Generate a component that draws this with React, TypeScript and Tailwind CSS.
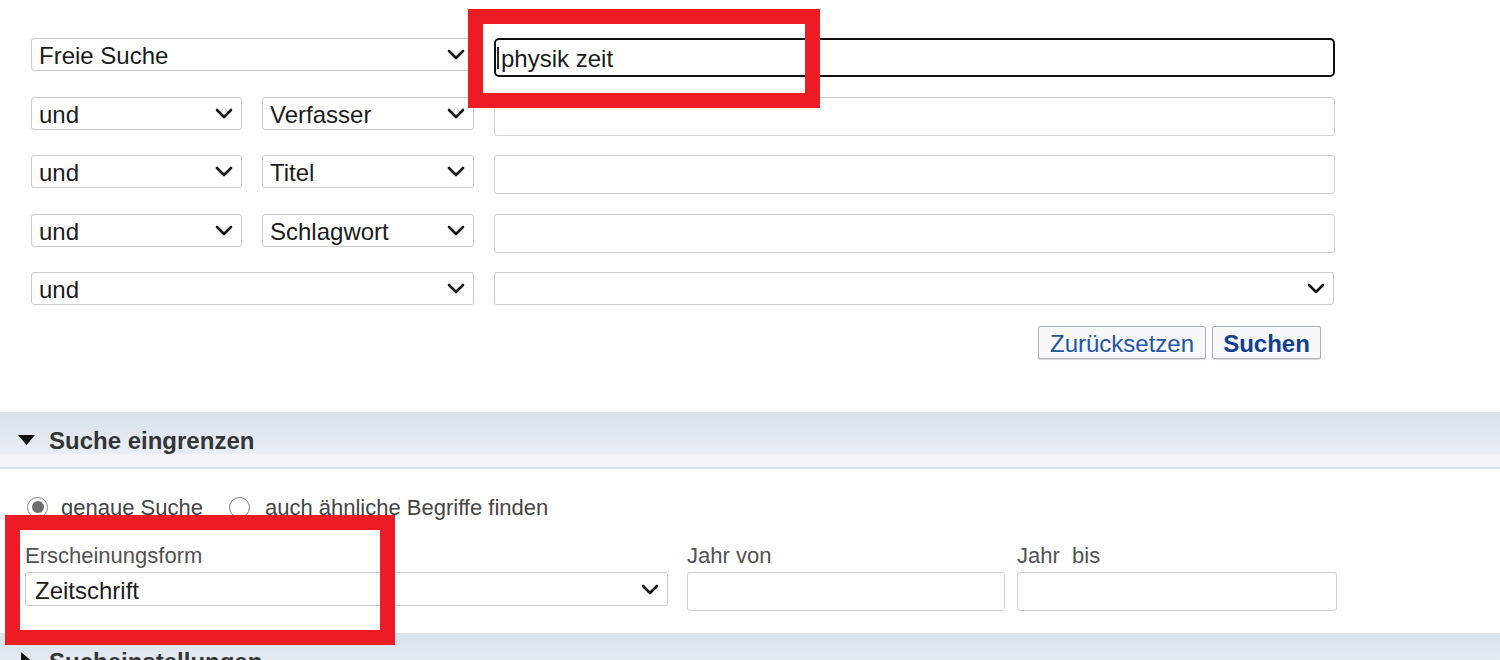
import React from "react";

const Chevron = () => (
  <svg width="18" height="11" viewBox="0 0 18 11" className="shrink-0">
    <path
      d="M2 2 L9 9 L16 2"
      fill="none"
      stroke="#141414"
      strokeWidth="2.6"
      strokeLinecap="round"
      strokeLinejoin="round"
    />
  </svg>
);

type SelectProps = {
  label?: string;
  className?: string;
};

const Select: React.FC<SelectProps> = ({ label = "", className = "" }) => (
  <div
    className={`flex h-[33px] items-center justify-between rounded-[3px] border-[1.5px] border-[#cccccc] bg-white pl-[7px] pr-[8px] text-[24px] leading-none text-[#1b1b1b] ${className}`}
  >
    <span className="pt-[3px]">{label}</span>
    <Chevron />
  </div>
);

const TextBox: React.FC<{ className?: string }> = ({ className = "" }) => (
  <div
    className={`h-[39px] rounded-[3px] border-[1.5px] border-[#d2d2d2] bg-white ${className}`}
  />
);

const SectionHeader: React.FC<{ title: string; open: boolean }> = ({
  title,
  open,
}) => (
  <div className="flex h-[57px] items-center border-b-2 border-[#d5e1ee] bg-[linear-gradient(to_bottom,#d9e2ed_0%,#e9eef5_76%,#f2f4f7_77%,#f2f4f7_100%)]">
    <div className="flex w-[49px] justify-center pl-[3px]">
      {open ? (
        <svg width="17" height="10" viewBox="0 0 17 10">
          <polygon points="0,0 17,0 8.5,10" fill="#111" />
        </svg>
      ) : (
        <svg width="10" height="17" viewBox="0 0 10 17">
          <polygon points="0,0 10,8.5 0,17" fill="#111" />
        </svg>
      )}
    </div>
    <span className="pt-[3px] text-[24px] font-bold text-[#353535]">{title}</span>
  </div>
);

export default function App() {
  const rows = [
    { op: "und", field: "Verfasser" },
    { op: "und", field: "Titel" },
    { op: "und", field: "Schlagwort" },
  ];

  return (
    <div
      className="relative h-[660px] w-full overflow-hidden bg-white text-[#1b1b1b]"
      style={{ fontFamily: '"Liberation Sans", Arial, sans-serif' }}
    >
      {/* search rows */}
      <div className="pl-[31px] pt-[38px]">
        <div className="flex flex-col gap-[19.5px]">
          <div className="flex items-start gap-[20px]">
            <Select label="Freie Suche" className="w-[443px]" />
            <div className="flex h-[39px] w-[841px] items-center rounded-[5px] border-2 border-[#111111] bg-white pl-[1px]">
              <span className="h-[22px] w-[2px] bg-[#2a2a2a]" />
              <span className="ml-[2px] pt-[2px] text-[24px] leading-none text-[#1b1b1b]">
                physik zeit
              </span>
            </div>
          </div>

          {rows.map((r) => (
            <div key={r.field} className="flex items-start gap-[20px]">
              <Select label={r.op} className="w-[211px]" />
              <Select label={r.field} className="w-[212px]" />
              <TextBox className="w-[841px]" />
            </div>
          ))}

          <div className="flex items-start gap-[20px]">
            <Select label="und" className="w-[443px]" />
            <Select className="w-[840px]" />
          </div>
        </div>

        <div className="mt-[21px] flex w-[1290px] justify-end gap-[6px]">
          <button className="flex h-[33px] w-[168px] items-center justify-center rounded-[2px] border-[1.5px] border-[#aab0b8] bg-[#f6f8fa] pt-[2px] text-[24px] leading-none text-[#2456a6] shadow-[0_1px_1px_rgba(0,0,0,0.15)]">
            Zurücksetzen
          </button>
          <button className="flex h-[33px] w-[109px] items-center justify-center rounded-[2px] border-[1.5px] border-[#aab0b8] bg-[#f6f8fa] pt-[2px] text-[24px] font-bold leading-none text-[#0f3f8e] shadow-[0_1px_1px_rgba(0,0,0,0.15)]">
            Suchen
          </button>
        </div>
      </div>

      {/* Suche eingrenzen */}
      <div className="mt-[53px]">
        <SectionHeader title="Suche eingrenzen" open />

        <div className="mt-[26px] flex h-[24px] items-center pl-[27px] text-[22px] text-[#454545]">
          <span className="flex h-[21px] w-[21px] items-center justify-center rounded-full border-[1.5px] border-[#8a8a8a] bg-white">
            <span className="h-[12px] w-[12px] rounded-full bg-[#6e6e6e]" />
          </span>
          <span className="ml-[13px]">genaue Suche</span>
          <span className="ml-[26px] h-[21px] w-[21px] rounded-full border-[1.5px] border-[#7a7a7a] bg-white" />
          <span className="ml-[15px]">auch ähnliche Begriffe finden</span>
        </div>

        <div className="mt-[26px] flex items-start pl-[25px] text-[22px] text-[#525252]">
          <div className="w-[643px]">
            <div className="h-[22px] leading-[22px]">Erscheinungsform</div>
            <Select
              label="Zeitschrift"
              className="mt-[5px] h-[34px] w-[643px] pl-[9px]"
            />
          </div>
          <div className="ml-[19px] w-[318px]">
            <div className="h-[22px] leading-[22px]">Jahr von</div>
            <TextBox className="mt-[5px] w-[318px]" />
          </div>
          <div className="ml-[12px] w-[320px]">
            <div className="h-[22px] whitespace-pre leading-[22px]">Jahr  bis</div>
            <TextBox className="mt-[5px] w-[320px]" />
          </div>
        </div>

        <div className="mt-[22px]">
          <SectionHeader title="Sucheinstellungen" open={false} />
        </div>
      </div>

      {/* annotation boxes */}
      <div className="pointer-events-none absolute left-[468px] top-[9px] h-[99px] w-[352px] border-[15px] border-[#ed1c24]" />
      <div className="pointer-events-none absolute left-[5px] top-[515px] h-[130px] w-[390px] border-[15px] border-[#ed1c24]" />
    </div>
  );
}
